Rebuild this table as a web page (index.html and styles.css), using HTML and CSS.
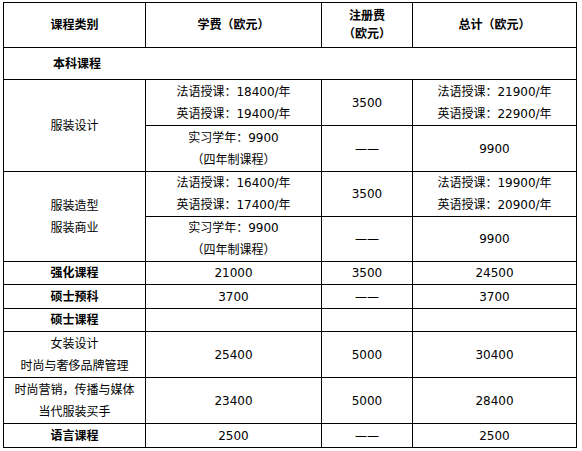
FILE: index.html
```html
<!DOCTYPE html>
<html lang="zh">
<head>
<meta charset="utf-8">
<title>课程费用</title>
<link rel="stylesheet" href="styles.css">
</head>
<body>
<table class="fees">
  <colgroup>
    <col class="c1"><col class="c2"><col class="c3"><col class="c4">
  </colgroup>
  <tr class="h45">
    <th>课程类别</th>
    <th>学费（欧元）</th>
    <th class="tight">注册费<br>（欧元）</th>
    <th>总计（欧元）</th>
  </tr>
  <tr class="h32">
    <th colspan="4" class="section">本科课程</th>
  </tr>
  <tr class="h46">
    <td rowspan="2">服装设计</td>
    <td>法语授课：18400/年<br>英语授课：19400/年</td>
    <td>3500</td>
    <td>法语授课：21900/年<br>英语授课：22900/年</td>
  </tr>
  <tr class="h46">
    <td>实习学年：9900<br>（四年制课程）</td>
    <td>——</td>
    <td>9900</td>
  </tr>
  <tr class="h44">
    <td rowspan="2">服装造型<br>服装商业</td>
    <td>法语授课：16400/年<br>英语授课：17400/年</td>
    <td>3500</td>
    <td>法语授课：19900/年<br>英语授课：20900/年</td>
  </tr>
  <tr class="h45">
    <td>实习学年：9900<br>（四年制课程）</td>
    <td>——</td>
    <td>9900</td>
  </tr>
  <tr class="h23">
    <th>强化课程</th>
    <td>21000</td>
    <td>3500</td>
    <td>24500</td>
  </tr>
  <tr class="h24">
    <th>硕士预科</th>
    <td>3700</td>
    <td>——</td>
    <td>3700</td>
  </tr>
  <tr class="h23">
    <th>硕士课程</th>
    <td></td>
    <td></td>
    <td></td>
  </tr>
  <tr class="h46">
    <td>女装设计<br>时尚与奢侈品牌管理</td>
    <td>25400</td>
    <td>5000</td>
    <td>30400</td>
  </tr>
  <tr class="h46">
    <td>时尚营销，传播与媒体<br>当代服装买手</td>
    <td>23400</td>
    <td>5000</td>
    <td>28400</td>
  </tr>
  <tr class="h24">
    <th>语言课程</th>
    <td>2500</td>
    <td>——</td>
    <td>2500</td>
  </tr>
</table>
</body>
</html>
```
FILE: styles.css
```css
html, body {
  margin: 0;
  padding: 0;
  background: #fff;
}

.fees {
  margin: 2px 0 0 3px;
  width: 574px;
  table-layout: fixed;
  border-collapse: collapse;
  font-family: "DejaVu Sans", "Noto Sans CJK SC", sans-serif;
  font-size: 12px;
  color: #000;
}

.c1 { width: 142px; }
.c2 { width: 176px; }
.c3 { width: 91px; }
.c4 { width: 164px; }

.fees th,
.fees td {
  border: 1px solid #000;
  padding: 0;
  text-align: center;
  vertical-align: middle;
  line-height: 22px;
  white-space: nowrap;
}

.fees th {
  font-weight: bold;
}

.fees .tight {
  line-height: 18px;
}

.fees .section {
  text-align: left;
  padding-left: 49px;
}

.h23 { height: 23px; }
.h24 { height: 24px; }
.h32 { height: 32px; }
.h44 { height: 44px; }
.h45 { height: 45px; }
.h46 { height: 46px; }
```
